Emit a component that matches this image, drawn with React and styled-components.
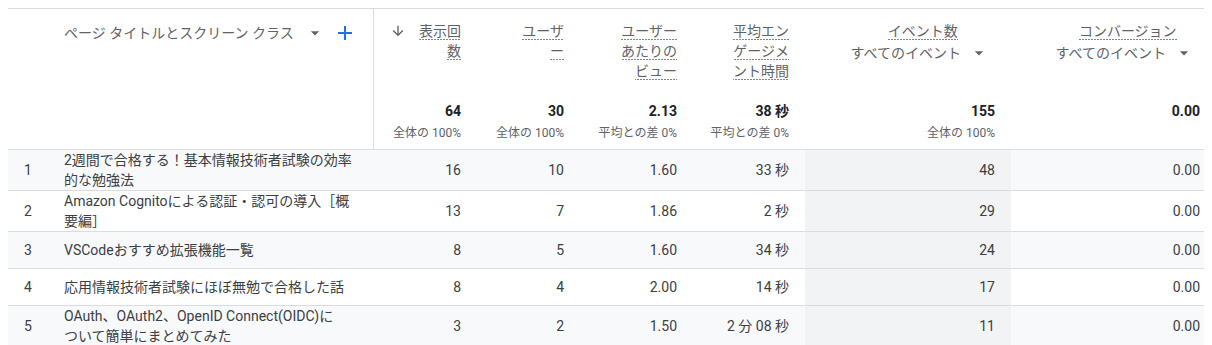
import React from 'react';
import styled, { createGlobalStyle } from 'styled-components';

const GlobalStyle = createGlobalStyle`
  html, body { padding: 0; overflow: hidden; background: #ffffff; }
  html { margin: 0; }
  body { margin: 8px; font-family: Roboto, "Noto Sans CJK JP", sans-serif; }
`;

const FONT = `Roboto, "Noto Sans CJK JP", sans-serif`;

const Table = styled.table`
  border-collapse: separate;
  border-spacing: 0;
  table-layout: fixed;
  width: 1208px;
  font-family: ${FONT};
  font-size: 14px;
  color: #3c4043;
`;

const Col = styled.col`
  width: ${p => p.$w}px;
`;

const Th = styled.th`
  padding: 0;
  vertical-align: top;
  font-weight: 400;
  text-align: left;
  border-top: 1px solid #dadce0;
  border-bottom: 1px solid #dadce0;
  border-right: ${p => (p.$divider ? '1px solid #dadce0' : '0')};
`;

const HeadInner = styled.div`
  box-sizing: border-box;
  height: 140px;
  padding: 12px 16px 8px ${p => (p.$flushLeft ? 0 : 16)}px;
  display: flex;
  flex-direction: column;
`;

const DimHead = styled.div`
  display: flex;
  align-items: center;
  height: 24px;
  color: #5f6368;
  line-height: 20px;
  white-space: nowrap;
`;

const DimDrop = styled.span`
  display: inline-flex;
  margin-left: 11px;
  color: #5f6368;
`;

const AddButton = styled.span`
  display: inline-flex;
  margin-left: 8px;
  color: #1a73e8;
`;

const LabelArea = styled.div`
  height: 80px;
  display: flex;
  justify-content: flex-end;
  align-items: flex-start;
  color: #5f6368;
  line-height: 20px;
`;

const SortIcon = styled.span`
  display: inline-flex;
  margin-top: 2px;
  margin-right: 8px;
  color: #5f6368;
  flex: none;
`;

const Label = styled.div`
  max-width: ${p => (p.$max ? `${p.$max}px` : 'none')};
  text-align: right;
  line-break: loose;
`;

const Dotted = styled.span`
  padding-bottom: 1px;
  background-image: linear-gradient(to right, #80868b 2px, transparent 2px);
  background-size: 3px 1px;
  background-repeat: repeat-x;
  background-position: 0 100%;
`;

const PickerBlock = styled.div`
  display: flex;
  flex-direction: column;
  align-items: center;
`;

const PickerRow = styled.div`
  display: flex;
  align-items: center;
  height: 24px;
  white-space: nowrap;
`;

const PickerCaret = styled.span`
  display: inline-flex;
  margin-left: 8px;
  margin-right: 6px;
`;

const TotalValue = styled.div`
  text-align: right;
  font-weight: 700;
  line-height: 20px;
  color: #202124;
`;

const TotalSub = styled.div`
  text-align: right;
  margin-top: 4px;
  font-size: 12px;
  line-height: 16px;
  color: #5f6368;
`;

const Row = styled.tr`
  background: ${p => (p.$striped ? '#f8f9fa' : '#ffffff')};
`;

const Td = styled.td`
  height: 36px;
  padding: 0 16px;
  line-height: 20px;
  vertical-align: middle;
  text-align: right;
  border-bottom: 1px solid #dadce0;
  background: ${p => (p.$highlight ? '#f1f3f4' : 'transparent')};
`;

const IndexTd = styled(Td)`
  text-align: left;
  padding: 0 0 0 16px;
`;

const DimTd = styled(Td)`
  text-align: left;
  padding: 0 16px 0 0;
  color: #3c4043;
`;

const Phrase = styled.span`
  white-space: nowrap;
`;

const Caret = ({ size = 20 }) => (
  <svg width={size} height={size} viewBox="0 0 24 24" fill="currentColor" aria-hidden="true">
    <path d="M7 10l5 5 5-5z" />
  </svg>
);

const Plus = () => (
  <svg width="24" height="24" viewBox="0 0 24 24" fill="currentColor" aria-hidden="true">
    <path d="M19 13h-6v6h-2v-6H5v-2h6V5h2v6h6v2z" />
  </svg>
);

const ArrowDown = () => (
  <svg width="16" height="16" viewBox="0 0 24 24" fill="currentColor" aria-hidden="true">
    <path d="M20 12l-1.41-1.41L13 16.17V4h-2v12.17l-5.58-5.59L4 12l8 8 8-8z" />
  </svg>
);

const metrics = [
  { key: 'views', label: '表示回数', width: 103, max: 48, sort: true, total: '64', sub: '全体の 100%' },
  { key: 'users', label: 'ユーザー', width: 103, max: 48, total: '30', sub: '全体の 100%' },
  { key: 'vpu', label: 'ユーザーあたりのビュー', width: 113, max: 60, total: '2.13', sub: '平均との差 0%' },
  { key: 'eng', label: '平均エンゲージメント時間', width: 112, max: 60, total: '38 秒', sub: '平均との差 0%' },
  { key: 'events', label: 'イベント数', width: 206, picker: 'すべてのイベント', total: '155', sub: '全体の 100%', highlight: true },
  { key: 'conv', label: 'コンバージョン', width: 205, picker: 'すべてのイベント', total: '0.00' },
];

const rows = [
  { title: '2週間で合格する！基本情報技術者試験の効率的な勉強法', values: ['16', '10', '1.60', '33 秒', '48', '0.00'] },
  { title: 'Amazon Cognitoによる認証・認可の導入［概要編］', values: ['13', '7', '1.86', '2 秒', '29', '0.00'] },
  { title: 'VSCodeおすすめ拡張機能一覧', values: ['8', '5', '1.60', '34 秒', '24', '0.00'] },
  { title: '応用情報技術者試験にほぼ無勉で合格した話', values: ['8', '4', '2.00', '14 秒', '17', '0.00'] },
  {
    title: (
      <>
        OAuth、OAuth2、OpenID Connect(OIDC)に<Phrase>ついて</Phrase>簡単にまとめてみた
      </>
    ),
    values: ['3', '2', '1.50', '2 分 08 秒', '11', '0.00'],
  },
];

function MetricHeader({ m }) {
  return (
    <Th>
      <HeadInner>
        <LabelArea>
          {m.picker ? (
            <PickerBlock>
              <Label>
                <Dotted>{m.label}</Dotted>
              </Label>
              <PickerRow>
                {m.picker}
                <PickerCaret>
                  <Caret />
                </PickerCaret>
              </PickerRow>
            </PickerBlock>
          ) : (
            <>
              {m.sort && (
                <SortIcon>
                  <ArrowDown />
                </SortIcon>
              )}
              <Label $max={m.max}>
                <Dotted>{m.label}</Dotted>
              </Label>
            </>
          )}
        </LabelArea>
        <TotalValue>{m.total}</TotalValue>
        {m.sub && <TotalSub>{m.sub}</TotalSub>}
      </HeadInner>
    </Th>
  );
}

export default function App() {
  return (
    <>
      <GlobalStyle />
      <Table>
        <colgroup>
          <Col $w={56} />
          <Col $w={310} />
          {metrics.map(m => (
            <Col key={m.key} $w={m.width} />
          ))}
        </colgroup>
        <thead>
          <tr>
            <Th />
            <Th $divider>
              <HeadInner $flushLeft>
                <DimHead>
                  ページ タイトルとスクリーン クラス
                  <DimDrop>
                    <Caret />
                  </DimDrop>
                  <AddButton>
                    <Plus />
                  </AddButton>
                </DimHead>
              </HeadInner>
            </Th>
            {metrics.map(m => (
              <MetricHeader key={m.key} m={m} />
            ))}
          </tr>
        </thead>
        <tbody>
          {rows.map((r, i) => (
            <Row key={i} $striped={i % 2 === 0}>
              <IndexTd>{i + 1}</IndexTd>
              <DimTd>{r.title}</DimTd>
              {r.values.map((v, j) => (
                <Td key={j} $highlight={metrics[j].highlight}>
                  {v}
                </Td>
              ))}
            </Row>
          ))}
        </tbody>
      </Table>
    </>
  );
}
